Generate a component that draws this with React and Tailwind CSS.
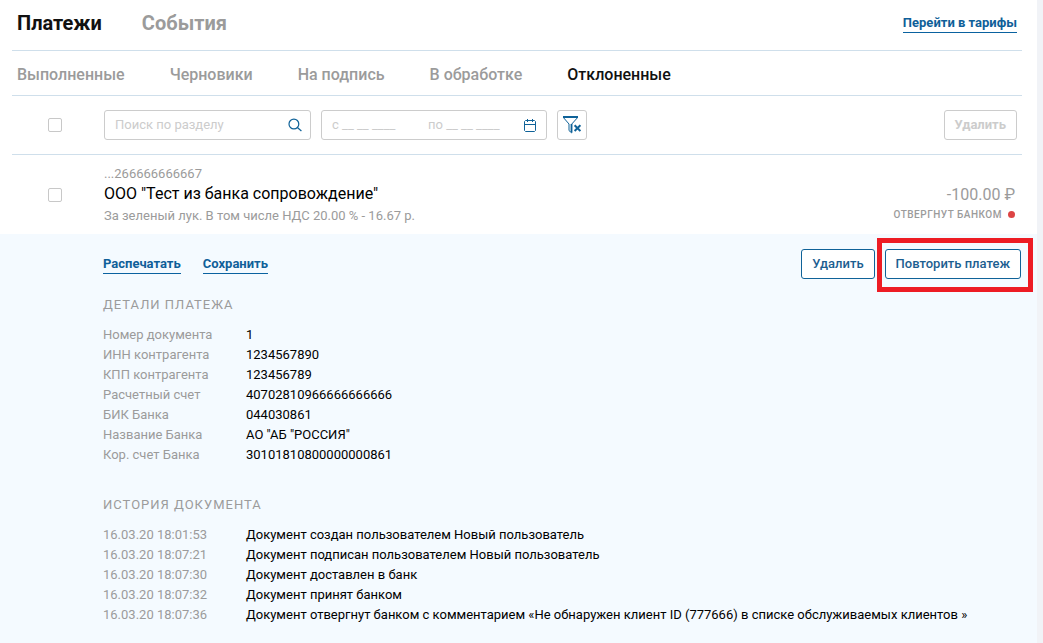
import React from "react";

const STATUS_TABS = ["Выполненные", "Черновики", "На подпись", "В обработке", "Отклоненные"];

const DETAILS = [
  ["Номер документа", "1"],
  ["ИНН контрагента", "1234567890"],
  ["КПП контрагента", "123456789"],
  ["Расчетный счет", "40702810966666666666"],
  ["БИК Банка", "044030861"],
  ["Название Банка", 'АО "АБ "РОССИЯ"'],
  ["Кор. счет Банка", "30101810800000000861"],
];

const HISTORY = [
  ["16.03.20 18:01:53", "Документ создан пользователем Новый пользователь"],
  ["16.03.20 18:07:21", "Документ подписан пользователем Новый пользователь"],
  ["16.03.20 18:07:30", "Документ доставлен в банк"],
  ["16.03.20 18:07:32", "Документ принят банком"],
  [
    "16.03.20 18:07:36",
    "Документ отвергнут банком с комментарием «Не обнаружен клиент ID (777666) в списке обслуживаемых клиентов »",
  ],
];

function SearchIcon() {
  return (
    <svg width="14" height="14" viewBox="0 0 14 14" fill="none" stroke="#0f6298" strokeWidth="1.2" aria-hidden="true">
      <circle cx="5.9" cy="6" r="4.9" />
      <path d="M9.4 9.5 13.4 13" />
    </svg>
  );
}

function CalendarIcon() {
  return (
    <svg width="12" height="14" viewBox="0 0 12 14" fill="none" stroke="#0f6298" aria-hidden="true">
      <path d="M1.5 2.5h9l1 1v9l-1 1h-9l-1-1v-9z M0.5 6.5h11 M3.5 1v3 M8.5 1v3" />
    </svg>
  );
}

function ClearFilterIcon() {
  return (
    <svg width="18" height="18" viewBox="0 0 18 18" fill="none" stroke="#0f6298" aria-hidden="true">
      <path d="M0 1h15" strokeWidth="2" />
      <path d="M0.8 2 6 8v6.6l2.8 2.4V8L14.2 2" strokeWidth="1" />
      <path d="M8.4 8v8" strokeWidth="1.6" />
      <path d="M11.6 9.2 17.4 15 M17.4 9.2 11.6 15" strokeWidth="2" />
    </svg>
  );
}

function Check({ label }) {
  return (
    <input
      type="checkbox"
      aria-label={label}
      className="h-3.5 w-3.5 shrink-0 appearance-none rounded-xs border border-[#c8c8c8] bg-white checked:bg-[#0f6298]"
    />
  );
}

function TextLink({ children }) {
  return (
    <a href="#" className="border-b border-[#0a62a0] text-[13px] leading-[18px] font-bold text-[#0f5f99]">
      {children}
    </a>
  );
}

function OutlineButton({ children }) {
  return (
    <button
      type="button"
      className="h-[30px] rounded-[3px] border border-[#0f6298] bg-white px-2.5 text-[13px] font-medium text-[#1c5e90]"
    >
      {children}
    </button>
  );
}

function Section({ title, rows }) {
  return (
    <section>
      <h2 className="mb-2.5 text-[13px] leading-5 tracking-[1px] text-[#9b9b9b] uppercase">{title}</h2>
      <table className="w-full text-left text-[13px] leading-5">
        <tbody>
          {rows.map(([name, value]) => (
            <tr key={name}>
              <th scope="row" className="w-[143px] p-0 font-normal text-[#9b9b9b]">
                {name}
              </th>
              <td className="p-0 text-black">{value}</td>
            </tr>
          ))}
        </tbody>
      </table>
    </section>
  );
}

export default function App() {
  return (
    <div className="min-h-screen bg-[#f1f3f7] pr-1.5 font-[Roboto,sans-serif]">
      <main className="flex min-h-screen flex-col bg-white">
        <div className="pr-[15px] pl-3">
          <header className="flex h-[51px] items-center justify-between border-b border-[#cfdfeb] pr-[5px] pb-1 pl-[5px]">
            <nav aria-label="Разделы" className="flex gap-10 text-xl font-bold">
              <a href="#" className="text-[#111]">Платежи</a>
              <a href="#" className="text-[#9b9b9b]">События</a>
            </nav>
            <TextLink>Перейти в тарифы</TextLink>
          </header>

          <nav
            aria-label="Статусы"
            className="flex h-[45px] items-center gap-[45px] border-b border-[#cfdfeb] pt-1 pl-[5px] text-base font-medium"
          >
            {STATUS_TABS.map((tab) => (
              <a key={tab} href="#" className={tab === "Отклоненные" ? "text-[#111]" : "text-[#9b9b9b]"}>
                {tab}
              </a>
            ))}
          </nav>

          <form className="flex h-[59px] items-center border-b border-[#cfdfeb] pr-[5px] pl-9">
            <Check label="Выбрать все" />
            <div className="ml-[42px] flex h-[30px] w-[207px] items-center rounded-[3px] border border-[#ccc] pr-2 pl-2.5">
              <input
                aria-label="Поиск по разделу"
                placeholder="Поиск по разделу"
                className="min-w-0 flex-1 text-[13px] placeholder:text-[#ccc] focus:outline-none"
              />
              <SearchIcon />
            </div>
            <div className="ml-2.5 flex h-[30px] w-[226px] items-center rounded-[3px] border border-[#ccc] pr-2.5 pl-2.5">
              <input
                aria-label="Дата с"
                placeholder="с __ __ ____"
                className="w-24 min-w-0 text-[13px] placeholder:text-[#ccc] focus:outline-none"
              />
              <input
                aria-label="Дата по"
                placeholder="по __ __ ____"
                className="min-w-0 flex-1 text-[13px] placeholder:text-[#ccc] focus:outline-none"
              />
              <CalendarIcon />
            </div>
            <button
              type="button"
              aria-label="Сбросить фильтр"
              className="ml-2.5 flex h-[30px] w-[30px] items-center justify-center rounded-[3px] border border-[#ccc]"
            >
              <ClearFilterIcon />
            </button>
            <button
              type="button"
              disabled
              className="ml-auto h-[30px] rounded-[3px] border border-[#ccc] px-2.5 text-[13px] font-bold text-[#ccc]"
            >
              Удалить
            </button>
          </form>
        </div>

        <article className="flex flex-1 flex-col">
          <div className="flex h-[79px] items-center pr-[22px] pl-12">
            <Check label="Выбрать платеж" />
            <div className="ml-[42px] pt-0.5">
              <p className="text-[13px] leading-4 text-[#9b9b9b]">...266666666667</p>
              <p className="text-base leading-6 text-black">ООО "Тест из банка сопровождение"</p>
              <p className="text-[13px] leading-5 text-[#9b9b9b]">
                За зеленый лук. В том числе НДС 20.00 % - 16.67 р.
              </p>
            </div>
            <div className="ml-auto pt-5 text-right text-[#9b9b9b]">
              <p className="text-base leading-5">-100.00 ₽</p>
              <p className="flex items-center justify-end gap-1.5 text-[10px] leading-5 font-medium tracking-wider uppercase">
                Отвергнут банком
                <span className="h-[7px] w-[7px] rounded-full bg-[#dd4444]" />
              </p>
            </div>
          </div>

          <div className="flex-1 bg-[#f4faff] pt-[15px] pr-4 pb-4 pl-[103px]">
            <div className="mb-4 flex items-center gap-[22px]">
              <TextLink>Распечатать</TextLink>
              <TextLink>Сохранить</TextLink>
              <div className="ml-auto flex gap-2.5">
                <OutlineButton>Удалить</OutlineButton>
                <div className="relative">
                  <OutlineButton>Повторить платеж</OutlineButton>
                  <span className="pointer-events-none absolute -top-[11px] -right-3 -bottom-[13px] -left-2 border-5 border-[#ed1c24]" />
                </div>
              </div>
            </div>
            <div className="flex flex-col gap-[30px]">
              <Section title="Детали платежа" rows={DETAILS} />
              <Section title="История документа" rows={HISTORY} />
            </div>
          </div>
        </article>
      </main>
    </div>
  );
}
